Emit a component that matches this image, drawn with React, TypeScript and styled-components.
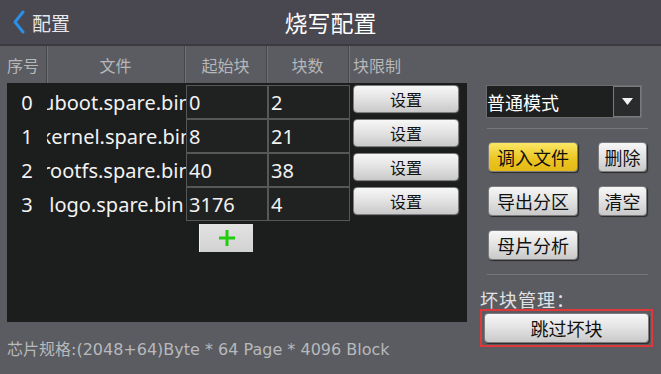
import styled, { createGlobalStyle } from 'styled-components';

const GlobalStyle = createGlobalStyle`
  html, body {
    margin: 0;
    padding: 0;
    background: #5b5c61;
  }
  body {
    font-family: "Noto Sans", "Noto Sans CJK SC", sans-serif;
  }
  * {
    box-sizing: border-box;
  }
`;

const SPage = styled.div`
  width: 661px;
  height: 374px;
  display: flex;
  flex-direction: column;
  background: #5b5c61;
  overflow: hidden;
`;

const STopBar = styled.div`
  height: 46px;
  flex: none;
  display: grid;
  grid-template-columns: 1fr auto 1fr;
  align-items: center;
  background: #49474f;
  border-bottom: 2px solid #3a393f;
`;

const SBack = styled.div`
  display: flex;
  align-items: center;
  gap: 6px;
  padding-left: 12px;
  color: #e8e8ec;
  font-size: 19px;
  font-family: "Noto Sans CJK SC", sans-serif;
`;

const STitle = styled.h1`
  margin: 0;
  color: #ffffff;
  font-size: 23px;
  font-weight: 400;
  font-family: "Noto Sans CJK SC", sans-serif;
`;

const SContent = styled.div`
  flex: 1;
  display: flex;
`;

const SLeft = styled.div`
  width: 468px;
  display: flex;
  flex-direction: column;
`;

const SHead = styled.div`
  height: 37px;
  display: grid;
  grid-template-columns: 47px 138px 82px 82px 1fr;
`;

const SHeadCell = styled.div<{ $left?: boolean; $divider?: boolean }>`
  display: flex;
  align-items: center;
  justify-content: ${({ $left }) => ($left ? 'flex-start' : 'center')};
  padding-left: ${({ $left }) => ($left ? '4px' : '0')};
  color: #b6b7ba;
  font-size: 16px;
  font-family: "Noto Sans CJK SC", sans-serif;
  border-right: ${({ $divider }) => ($divider ? '1px solid #46474b' : 'none')};
  box-shadow: ${({ $divider }) => ($divider ? '1px 0 0 #707176' : 'none')};
`;

const SBody = styled.div`
  margin-left: 7px;
  width: 460px;
  height: 239px;
  background: #1c1d1d;
  padding-top: 2px;
  display: grid;
  grid-template-columns: 40px 139px 82px 82px 1fr;
  grid-auto-rows: 34px;
  align-content: start;
`;

const SIndex = styled.div`
  display: flex;
  align-items: center;
  justify-content: center;
  color: #f2f2f2;
  font-size: 20px;
`;

// 파일명은 칸보다 넓으면 양쪽이 잘림
const SFileName = styled.div`
  display: flex;
  align-items: center;
  justify-content: center;
  overflow: hidden;
  white-space: nowrap;
  color: #f2f2f2;
  font-size: 20px;
`;

const SCell = styled.div`
  display: flex;
  align-items: center;
  padding-left: 2px;
  border: 1px solid #565757;
  background: #202121;
  color: #f2f2f2;
  font-size: 20px;
`;

const SButton = styled.button<{ $yellow?: boolean }>`
  display: flex;
  align-items: center;
  justify-content: center;
  padding: 0;
  border: 1px solid #7c7c7e;
  border-radius: 4px;
  background: ${({ $yellow }) =>
    $yellow
      ? 'linear-gradient(#fbe766, #ecc622 55%, #e3b916)'
      : 'linear-gradient(#f7f7f7, #e2e2e2 50%, #c9c9c9)'};
  box-shadow: 1px 1px 1px #2a2a2c;
  color: #111;
  font-size: 18px;
  font-family: "Noto Sans CJK SC", sans-serif;
  line-height: 1;
`;

const SSetButton = styled(SButton)`
  width: 106px;
  height: 28px;
  margin-left: 3px;
  font-size: 16px;
`;

const SAddButton = styled.button`
  grid-column: 3;
  justify-self: start;
  margin: 3px 0 0 13px;
  width: 54px;
  height: 28px;
  padding: 0;
  display: flex;
  align-items: center;
  justify-content: center;
  border: none;
  border-left: 1px solid #f0f0f0;
  background: linear-gradient(#e2e2e2, #d2d2d2);
`;

const SFooter = styled.div`
  flex: 1;
  display: flex;
  align-items: center;
  padding-left: 7px;
  color: #b7b9bc;
  font-size: 16px;
  font-family: "DejaVu Sans", "Noto Sans CJK SC", sans-serif;
  white-space: nowrap;
`;

const SRight = styled.div`
  flex: 1;
  display: flex;
  flex-direction: column;
  padding: 39px 0 0 12px;
`;

const SSelect = styled.div`
  width: 156px;
  height: 33px;
  margin-left: 6px;
  display: flex;
  background: #1e1f1f;
  border: 1px solid #6c6c6e;
`;

const SSelectText = styled.div`
  flex: 1;
  display: flex;
  align-items: center;
  color: #ffffff;
  font-size: 18px;
  font-family: "Noto Sans CJK SC", sans-serif;
`;

const SSelectArrow = styled.div`
  width: 28px;
  display: flex;
  align-items: center;
  justify-content: center;
  border: 1px solid #7a7a7c;
  background: #2a2b2c;
`;

const SDivider = styled.div<{ $top: number }>`
  margin: ${({ $top }) => $top}px 0 0 7px;
  width: 161px;
  height: 1px;
  background: #76777b;
`;

const SButtonGrid = styled.div`
  margin: 13px 0 0 8px;
  display: grid;
  grid-template-columns: 90px 49px;
  grid-auto-rows: 30px;
  column-gap: 20px;
  row-gap: 14px;
`;

const SLabel = styled.div`
  margin-top: 14px;
  color: #e2e2e4;
  font-size: 18px;
  line-height: 20px;
  letter-spacing: 1px;
  font-family: "Noto Sans CJK SC", sans-serif;
`;

const SHighlight = styled.div`
  width: 173px;
  height: 38px;
  padding: 2px;
  border: 2px solid #e0373a;
`;

const SSkipButton = styled(SButton)`
  width: 100%;
  height: 100%;
`;

interface Row {
  id: number;
  file: string;
  start: string;
  count: string;
}

const rows: Row[] = [
  { id: 0, file: 'uboot.spare.bin', start: '0', count: '2' },
  { id: 1, file: 'kernel.spare.bin', start: '8', count: '21' },
  { id: 2, file: 'rootfs.spare.bin', start: '40', count: '38' },
  { id: 3, file: 'logo.spare.bin', start: '3176', count: '4' },
];

const App = () => {
  return (
    <>
      <GlobalStyle />
      <SPage>
        <STopBar>
          <SBack>
            <svg width="14" height="24" viewBox="0 0 14 24">
              <path
                d="M11 2 L3 12 L11 22"
                fill="none"
                stroke="#2b8fe8"
                strokeWidth="3"
                strokeLinecap="round"
                strokeLinejoin="round"
              />
            </svg>
            配置
          </SBack>
          <STitle>烧写配置</STitle>
          <div />
        </STopBar>
        <SContent>
          <SLeft>
            <SHead>
              <SHeadCell $divider>序号</SHeadCell>
              <SHeadCell $divider>文件</SHeadCell>
              <SHeadCell $divider>起始块</SHeadCell>
              <SHeadCell $divider>块数</SHeadCell>
              <SHeadCell $left>块限制</SHeadCell>
            </SHead>
            <SBody>
              {rows.map((row) => (
                <>
                  <SIndex key={`i${row.id}`}>{row.id}</SIndex>
                  <SFileName key={`f${row.id}`}>
                    <span>{row.file}</span>
                  </SFileName>
                  <SCell key={`s${row.id}`}>{row.start}</SCell>
                  <SCell key={`c${row.id}`}>{row.count}</SCell>
                  <div key={`b${row.id}`}>
                    <SSetButton>设置</SSetButton>
                  </div>
                </>
              ))}
              <SAddButton>
                <svg width="18" height="18" viewBox="0 0 18 18">
                  <path d="M9 1 V17 M1 9 H17" stroke="#22cc11" strokeWidth="3" />
                </svg>
              </SAddButton>
            </SBody>
            <SFooter>芯片规格:(2048+64)Byte * 64 Page * 4096 Block</SFooter>
          </SLeft>
          <SRight>
            <SSelect>
              <SSelectText>普通模式</SSelectText>
              <SSelectArrow>
                <svg width="11" height="8" viewBox="0 0 11 8">
                  <path d="M0 0 H11 L5.5 7 Z" fill="#f4f4f4" />
                </svg>
              </SSelectArrow>
            </SSelect>
            <SDivider $top={10} />
            <SButtonGrid>
              <SButton $yellow>调入文件</SButton>
              <SButton>删除</SButton>
              <SButton>导出分区</SButton>
              <SButton>清空</SButton>
              <SButton>母片分析</SButton>
            </SButtonGrid>
            <SDivider $top={14} />
            <SLabel>坏块管理：</SLabel>
            <SHighlight>
              <SSkipButton>跳过坏块</SSkipButton>
            </SHighlight>
          </SRight>
        </SContent>
      </SPage>
    </>
  );
};

export default App;
